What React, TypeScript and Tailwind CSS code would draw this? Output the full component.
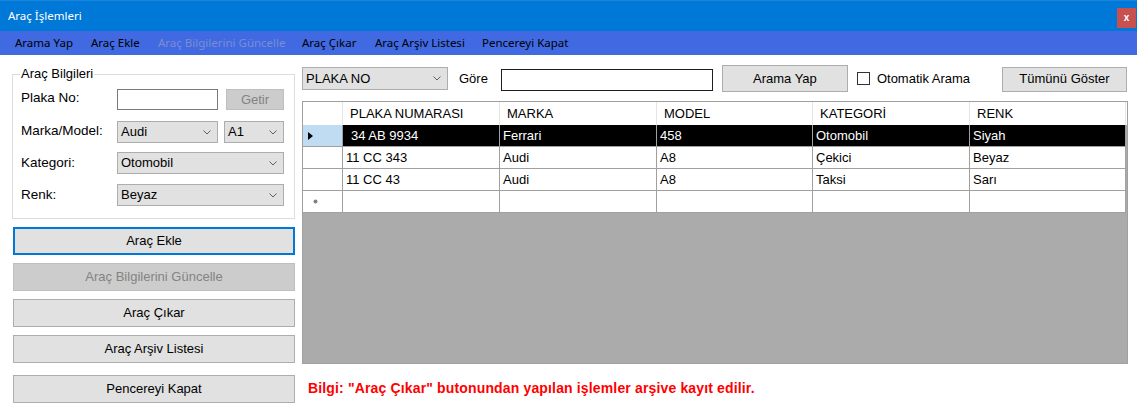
import React from 'react';

const sans = { fontFamily: '"Liberation Sans", Arial, sans-serif' };
const ui = { fontFamily: '"Noto Sans", "Open Sans", sans-serif' };

const Chevron = () => (
  <svg width="8" height="5" viewBox="0 0 8 5" className="shrink-0">
    <polyline points="0.5,0.5 4,4 7.5,0.5" fill="none" stroke="#606060" strokeWidth="1" />
  </svg>
);

const Combo = ({ value, className }: { value: string; className: string }) => (
  <div className={`flex items-center justify-between bg-[#e1e1e1] border border-[#adadad] pl-[3px] pr-[6px] text-[13px] text-black ${className}`}>
    <span>{value}</span>
    <Chevron />
  </div>
);

const Btn = ({ label, className = '' }: { label: string; className?: string }) => (
  <div className={`flex items-center justify-center text-[13px] ${className}`}>{label}</div>
);

const menuItems = [
  { label: 'Arama Yap', w: 'w-[76px]', off: false },
  { label: 'Araç Ekle', w: 'w-[67px]', off: false },
  { label: 'Araç Bilgilerini Güncelle', w: 'w-[144px]', off: true },
  { label: 'Araç Çıkar', w: 'w-[73px]', off: false },
  { label: 'Araç Arşiv Listesi', w: 'w-[107px]', off: false },
  { label: 'Pencereyi Kapat', w: 'w-[110px]', off: false },
];

const columns = ['PLAKA NUMARASI', 'MARKA', 'MODEL', 'KATEGORİ', 'RENK'];
const rows = [
  ['34 AB 9934', 'Ferrari', '458', 'Otomobil', 'Siyah'],
  ['11 CC 343', 'Audi', 'A8', 'Çekici', 'Beyaz'],
  ['11 CC 43', 'Audi', 'A8', 'Taksi', 'Sarı'],
];
const colW = ['w-[157px]', 'w-[157px]', 'w-[156px]', 'w-[157px]', 'w-[156px]'];

export default function App() {
  return (
    <div className="w-[1137px] h-[415px] bg-white overflow-hidden" style={sans}>
      {/* title bar */}
      <div className="h-[31px] bg-[#0078d7] border-t border-[#1a86db] flex items-center justify-between pl-[8px] pr-[1px]">
        <span className="text-white text-[11.5px]" style={ui}>Araç İşlemleri</span>
        <div className="w-[19px] h-[20px] bg-[#c75050] flex items-center justify-center text-white text-[10px] font-bold leading-none mt-[4px]">x</div>
      </div>

      {/* menu strip */}
      <div className="h-[24px] bg-[#4169e1] flex items-center pl-[15px] text-[11.5px]" style={ui}>
        {menuItems.map((m) => (
          <span key={m.label} className={`${m.w} whitespace-nowrap ${m.off ? 'text-[#7b8dd2]' : 'text-black'}`}>
            {m.label}
          </span>
        ))}
      </div>

      <div className="flex pl-[12px]">
        {/* left column */}
        <div className="w-[283px] flex flex-col">
          <div className="relative mt-[19px] h-[145px] border border-[#dcdcdc]">
            <span className="absolute -top-[9px] left-[7px] bg-white px-[1px] text-[13px] leading-[15px] text-black">Araç Bilgileri</span>
            <div className="flex flex-col pl-[8px] text-[13.5px] text-black">
              <div className="flex items-start mt-[14px] h-[21px]">
                <span className="w-[96px] -mt-[1px]">Plaka No:</span>
                <div className="w-[101px] h-[21px] border border-[#7a7a7a] bg-white" />
                <Btn label="Getir" className="ml-[8px] w-[58px] h-[21px] bg-[#cccccc] border border-[#bfbfbf] text-[#838383]" />
              </div>
              <div className="flex items-center mt-[11px] h-[22px]">
                <span className="w-[96px] -mt-[1px]">Marka/Model:</span>
                <Combo value="Audi" className="w-[101px] h-[22px]" />
                <Combo value="A1" className="ml-[6px] w-[60px] h-[22px]" />
              </div>
              <div className="flex items-start mt-[9px] h-[22px]">
                <span className="w-[96px] mt-[1px]">Kategori:</span>
                <Combo value="Otomobil" className="w-[167px] h-[22px]" />
              </div>
              <div className="flex items-start mt-[10px] h-[22px]">
                <span className="w-[96px] mt-[1px]">Renk:</span>
                <Combo value="Beyaz" className="w-[167px] h-[22px]" />
              </div>
            </div>
          </div>

          <div className="flex flex-col ml-[1px] w-[282px] text-black">
            <Btn label="Araç Ekle" className="mt-[8px] h-[28px] bg-[#e1e1e1] border-2 border-[#0078d7]" />
            <Btn label="Araç Bilgilerini Güncelle" className="mt-[8px] h-[28px] bg-[#cccccc] border border-[#bfbfbf] text-[#838383]" />
            <Btn label="Araç Çıkar" className="mt-[8px] h-[28px] bg-[#e1e1e1] border border-[#adadad]" />
            <Btn label="Araç Arşiv Listesi" className="mt-[8px] h-[28px] bg-[#e1e1e1] border border-[#adadad]" />
            <Btn label="Pencereyi Kapat" className="mt-[12px] h-[28px] bg-[#e1e1e1] border border-[#adadad]" />
          </div>
        </div>

        {/* right column */}
        <div className="ml-[7px] w-[826px] flex flex-col">
          <div className="mt-[10px] h-[27px] flex items-center text-[13px] text-black">
            <Combo value="PLAKA NO" className="w-[146px] h-[23px]" />
            <span className="ml-[11px]">Göre</span>
            <div className="ml-[13px] w-[212px] h-[22px] border border-[#1e1e1e] bg-white mt-[2px]" />
            <Btn label="Arama Yap" className="ml-[9px] w-[126px] h-[27px] bg-[#e1e1e1] border border-[#adadad]" />
            <div className="ml-[9px] w-[13px] h-[13px] border border-[#333333] bg-white" />
            <span className="ml-[7px]">Otomatik Arama</span>
            <Btn label="Tümünü Göster" className="ml-auto mr-[1px] w-[125px] h-[25px] mt-[1px] bg-[#e1e1e1] border border-[#adadad]" />
          </div>

          {/* data grid */}
          <div className="mt-[9px] h-[263px] bg-[#ababab] border border-[#a0a0a0] text-[13px]">
            <div className="flex h-[23px] bg-white">
              <div className="w-[40px] border-r border-[#e5e5e5]" />
              {columns.map((c, i) => (
                <div key={c} className={`${colW[i]} flex items-center pl-[7px] border-r border-[#e5e5e5] text-black`}>{c}</div>
              ))}
            </div>
            {rows.map((r, ri) => (
              <div key={ri} className="flex h-[22px]">
                <div className={`w-[40px] flex items-center pl-[5px] border-r border-b border-[#a0a0a0] ${ri === 0 ? 'bg-[#c0dcf3]' : 'bg-white'}`}>
                  {ri === 0 && (
                    <svg width="5" height="8" viewBox="0 0 5 8"><polygon points="0,0 5,4 0,8" fill="#000" /></svg>
                  )}
                </div>
                {r.map((v, ci) => (
                  <div
                    key={ci}
                    className={`${colW[ci]} flex items-center border-r border-b border-[#a0a0a0] ${ri === 0 ? 'bg-black text-white' : 'bg-white text-black'} ${ri === 0 && ci === 0 ? 'pl-[8px]' : 'pl-[3px]'}`}
                  >
                    {v}
                  </div>
                ))}
              </div>
            ))}
            <div className="flex h-[22px]">
              <div className="w-[40px] flex items-center pl-[10px] border-r border-b border-[#a0a0a0] bg-white">
                <svg width="5" height="5" viewBox="0 0 5 5"><circle cx="2.5" cy="2.5" r="2" fill="#808080" /></svg>
              </div>
              {colW.map((w, ci) => (
                <div key={ci} className={`${w} border-r border-b border-[#a0a0a0] bg-white`} />
              ))}
            </div>
          </div>

          <div className="mt-[17px] pl-[6px] text-[14px] tracking-[0.15px] leading-[15px] font-bold text-[#ff0000]">
            Bilgi: "Araç Çıkar" butonundan yapılan işlemler arşive kayıt edilir.
          </div>
        </div>
      </div>
    </div>
  );
}
